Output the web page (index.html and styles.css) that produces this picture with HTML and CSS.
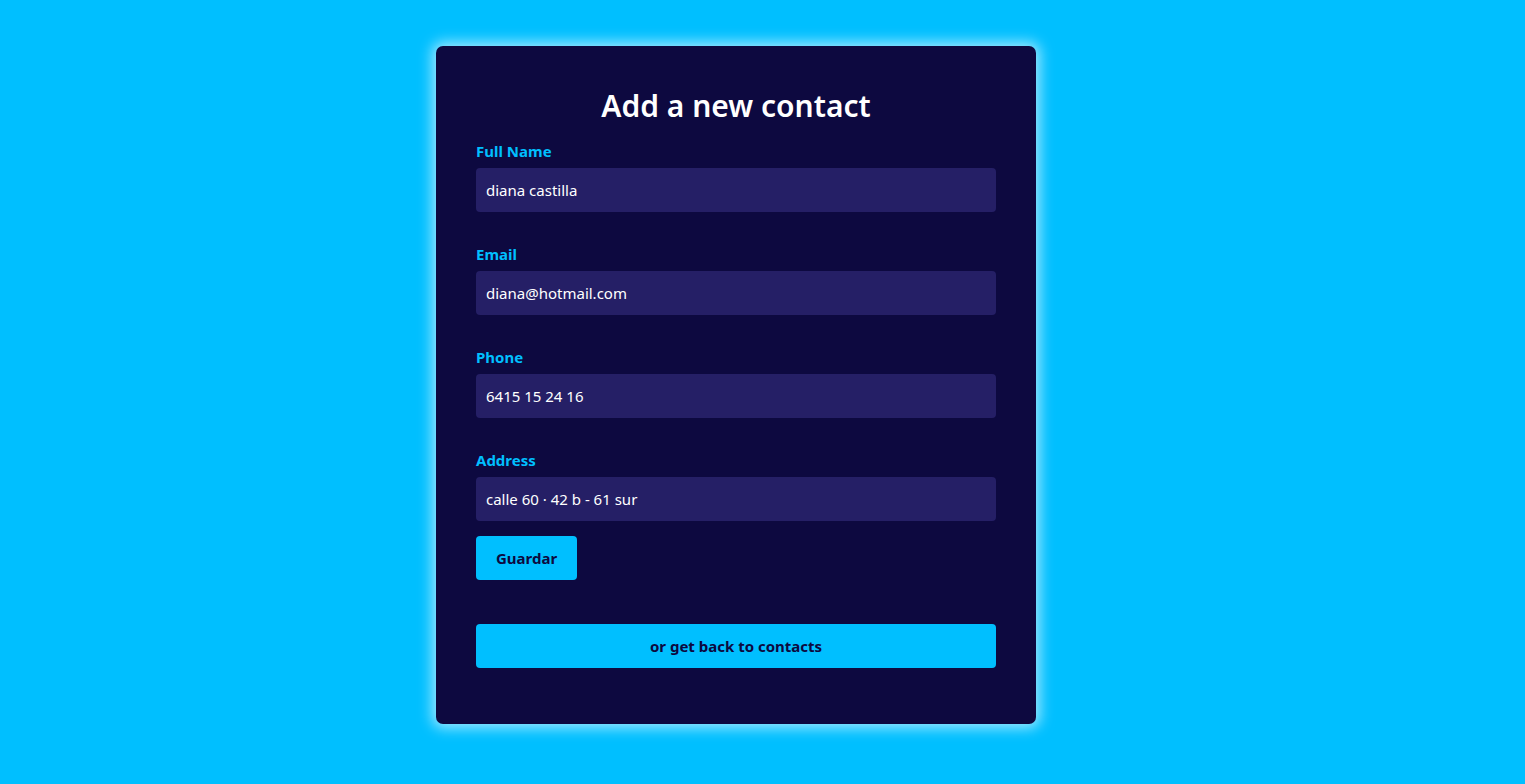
FILE: index.html
```html
<!DOCTYPE html>
<html lang="en">
<head>
<meta charset="utf-8">
<title>Add a new contact</title>
<link rel="stylesheet" href="styles.css">
</head>
<body>
<main class="card">
  <h1 class="title">Add a new contact</h1>
  <form class="form">
    <div class="field">
      <label class="label" for="name">Full Name</label>
      <input class="input" id="name" type="text" value="diana castilla">
    </div>
    <div class="field">
      <label class="label" for="email">Email</label>
      <input class="input" id="email" type="text" value="diana@hotmail.com">
    </div>
    <div class="field">
      <label class="label" for="phone">Phone</label>
      <input class="input" id="phone" type="text" value="6415 15 24 16">
    </div>
    <div class="field field-last">
      <label class="label" for="address">Address</label>
      <input class="input" id="address" type="text" value="calle 60 · 42 b - 61 sur">
    </div>
    <div class="actions">
      <button class="btn" type="button">Guardar</button>
    </div>
  </form>
  <a class="back" href="#">or get back to contacts</a>
</main>
</body>
</html>
```
FILE: styles.css
```css
html, body {
  margin: 0;
  padding: 0;
  background: #00bfff;
  height: 100%;
}
body {
  font-family: "Noto Sans", "Open Sans", sans-serif;
  display: flex;
  align-items: flex-start;
}
.card {
  box-sizing: border-box;
  width: 600px;
  margin: 46px 0 0 436px;
  padding: 40px 40px 56px;
  background: #0d0940;
  border-radius: 7px;
  box-shadow: 0 0 14px 4px rgba(210, 245, 255, 0.75);
  display: flex;
  flex-direction: column;
}
.title {
  margin: 0;
  font-size: 30px;
  line-height: 40px;
  font-weight: 600;
  color: #ffffff;
  text-align: center;
}
.form {
  margin-top: 15px;
  display: flex;
  flex-direction: column;
}
.field {
  display: flex;
  flex-direction: column;
  margin-bottom: 32px;
}
.field-last {
  margin-bottom: 15px;
}
.label {
  font-size: 15px;
  line-height: 20px;
  font-weight: 700;
  color: #00bfff;
  margin-bottom: 7px;
}
.input {
  box-sizing: border-box;
  height: 44px;
  border: none;
  border-radius: 4px;
  background: #251f66;
  color: #ffffff;
  font-family: inherit;
  font-size: 15px;
  padding: 0 10px;
  outline: none;
}
.actions {
  display: flex;
}
.btn {
  height: 44px;
  padding: 0 20px;
  border: none;
  border-radius: 4px;
  background: #00bfff;
  color: #0d0940;
  font-family: inherit;
  font-size: 15px;
  font-weight: 700;
  cursor: pointer;
}
.back {
  margin-top: 44px;
  height: 44px;
  border-radius: 4px;
  background: #00bfff;
  color: #0d0940;
  font-size: 15px;
  font-weight: 700;
  text-decoration: none;
  display: flex;
  align-items: center;
  justify-content: center;
}
```
